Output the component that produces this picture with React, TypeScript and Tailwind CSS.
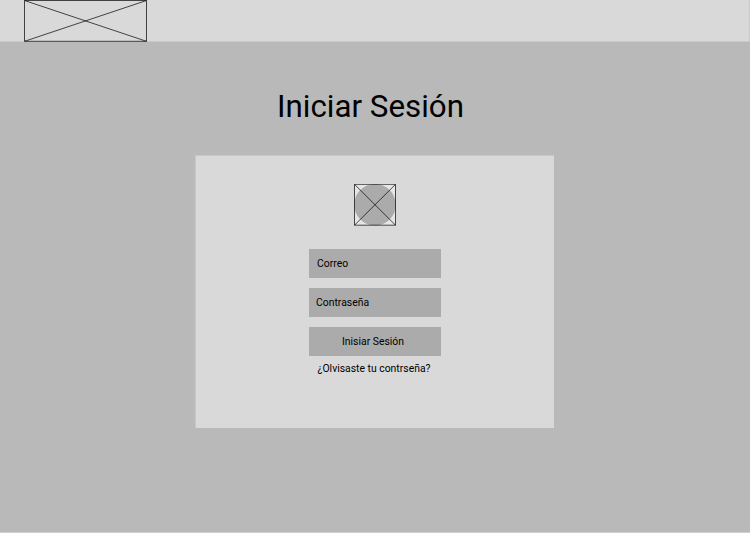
export default function App() {
  return (
    <div className="flex h-[533px] w-[750px] flex-col items-center overflow-hidden border-b border-[#d0d0d0] bg-[#b9b9b9] font-['Roboto',sans-serif] text-black">
      <header className="h-[42px] w-full shrink-0 border-r border-b border-[#c9c9c9] bg-[#d9d9d9] pl-6">
        <svg width="123" height="42" viewBox="0 0 123 42" fill="none" stroke="black" strokeWidth="0.7">
          <path d="M.5 .5H122.5V41.3H.5ZM.5 .5L122.5 41.3M122.5 .5L.5 41.3" />
        </svg>
      </header>
      <h1 className="mt-[45px] mr-[9px] h-[40px] text-[31.3px] leading-[40px]">Iniciar Sesión</h1>
      <main className="mt-[28px] mr-px flex h-[273px] w-[359px] flex-col items-center border-t border-l border-[#c8c8c8] bg-[#d9d9d9] pt-7 text-[10.4px]">
        <svg className="shrink-0" width="42" height="42" viewBox="0 0 42 42" fill="none" stroke="black" strokeWidth="0.7">
          <rect width="42" height="42" fill="#e6e6e6" stroke="none" />
          <circle cx="21" cy="20.8" r="20.8" fill="#ababab" stroke="none" />
          <path d="M.5 .3H41.5V41.2H.5ZM.5 .3L41.5 41.2M41.5 .3L.5 41.2" />
        </svg>
        <form className="mt-[23px] flex w-[132px] flex-col gap-[10px]">
          <div className="h-[29px] bg-[#ababab] pl-2 leading-[29px]">Correo</div>
          <div className="h-[29px] bg-[#ababab] pl-[7px] leading-[29px]">Contraseña</div>
          <button type="button" className="h-[29px] bg-[#ababab] pr-1 leading-[29px]">Inisiar Sesión</button>
        </form>
        <a className="mt-[6px] mr-[2px] leading-[14px]">¿Olvisaste tu contrseña?</a>
      </main>
    </div>
  );
}
